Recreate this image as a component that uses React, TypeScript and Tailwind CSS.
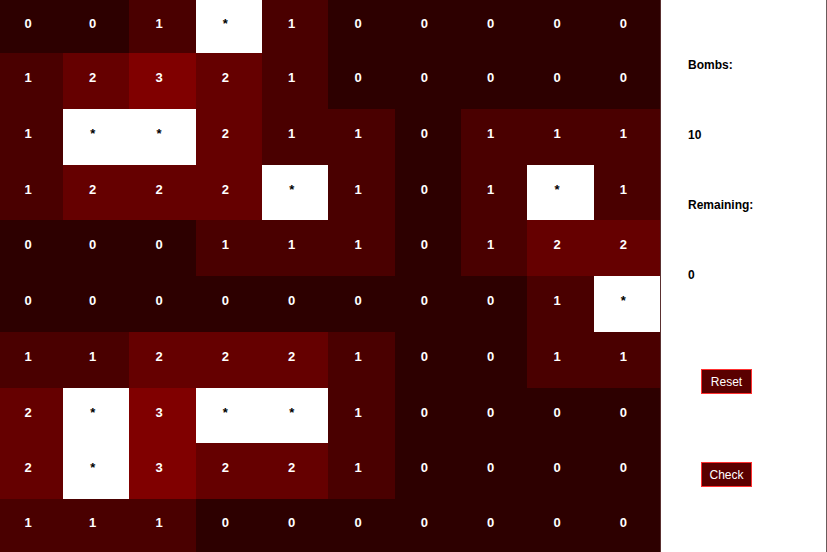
const board: string[][] = [
  ["0", "0", "1", "*", "1", "0", "0", "0", "0", "0"],
  ["1", "2", "3", "2", "1", "0", "0", "0", "0", "0"],
  ["1", "*", "*", "2", "1", "1", "0", "1", "1", "1"],
  ["1", "2", "2", "2", "*", "1", "0", "1", "*", "1"],
  ["0", "0", "0", "1", "1", "1", "0", "1", "2", "2"],
  ["0", "0", "0", "0", "0", "0", "0", "0", "1", "*"],
  ["1", "1", "2", "2", "2", "1", "0", "0", "1", "1"],
  ["2", "*", "3", "*", "*", "1", "0", "0", "0", "0"],
  ["2", "*", "3", "2", "2", "1", "0", "0", "0", "0"],
  ["1", "1", "1", "0", "0", "0", "0", "0", "0", "0"],
];

function cellClass(v: string): string {
  switch (v) {
    case "*":
      return "bg-white text-black";
    case "1":
      return "bg-[#4a0000] text-white";
    case "2":
      return "bg-[#650000] text-white";
    case "3":
      return "bg-[#800000] text-white";
    default:
      return "bg-[#2d0000] text-white";
  }
}

export default function App() {
  return (
    <div className="flex h-[552px] w-full bg-white font-['Liberation_Sans',Arial,sans-serif]">
      <div className="grid w-[661px] grid-cols-[63px_repeat(9,1fr)] grid-rows-[53px_repeat(8,1fr)_53px] border-r border-[#5a3030]">
        {board.map((row, r) =>
          row.map((v, c) => (
            <div
              key={`${r}-${c}`}
              className={`flex items-center justify-center pb-[6px] pr-[7px] text-[13px] font-bold ${cellClass(v)}`}
            >
              {v}
            </div>
          ))
        )}
      </div>

      <div className="flex flex-1 flex-col border-r border-[#6b5b5b] pl-[27px] pt-[58px] text-[12px] font-bold leading-[14px] text-black">
        <div>Bombs:</div>
        <div className="mt-[56px]">10</div>
        <div className="mt-[56px]">Remaining:</div>
        <div className="mt-[56px]">0</div>

        <button className="ml-[13px] mt-[87px] flex h-[25px] w-[51px] items-center justify-center border border-[#ff3030] bg-[#5a0000] text-[12px] font-normal text-white">
          Reset
        </button>
        <button className="ml-[13px] mt-[68px] flex h-[25px] w-[51px] items-center justify-center border border-[#ff3030] bg-[#5a0000] text-[12px] font-normal text-white">
          Check
        </button>
      </div>
    </div>
  );
}
